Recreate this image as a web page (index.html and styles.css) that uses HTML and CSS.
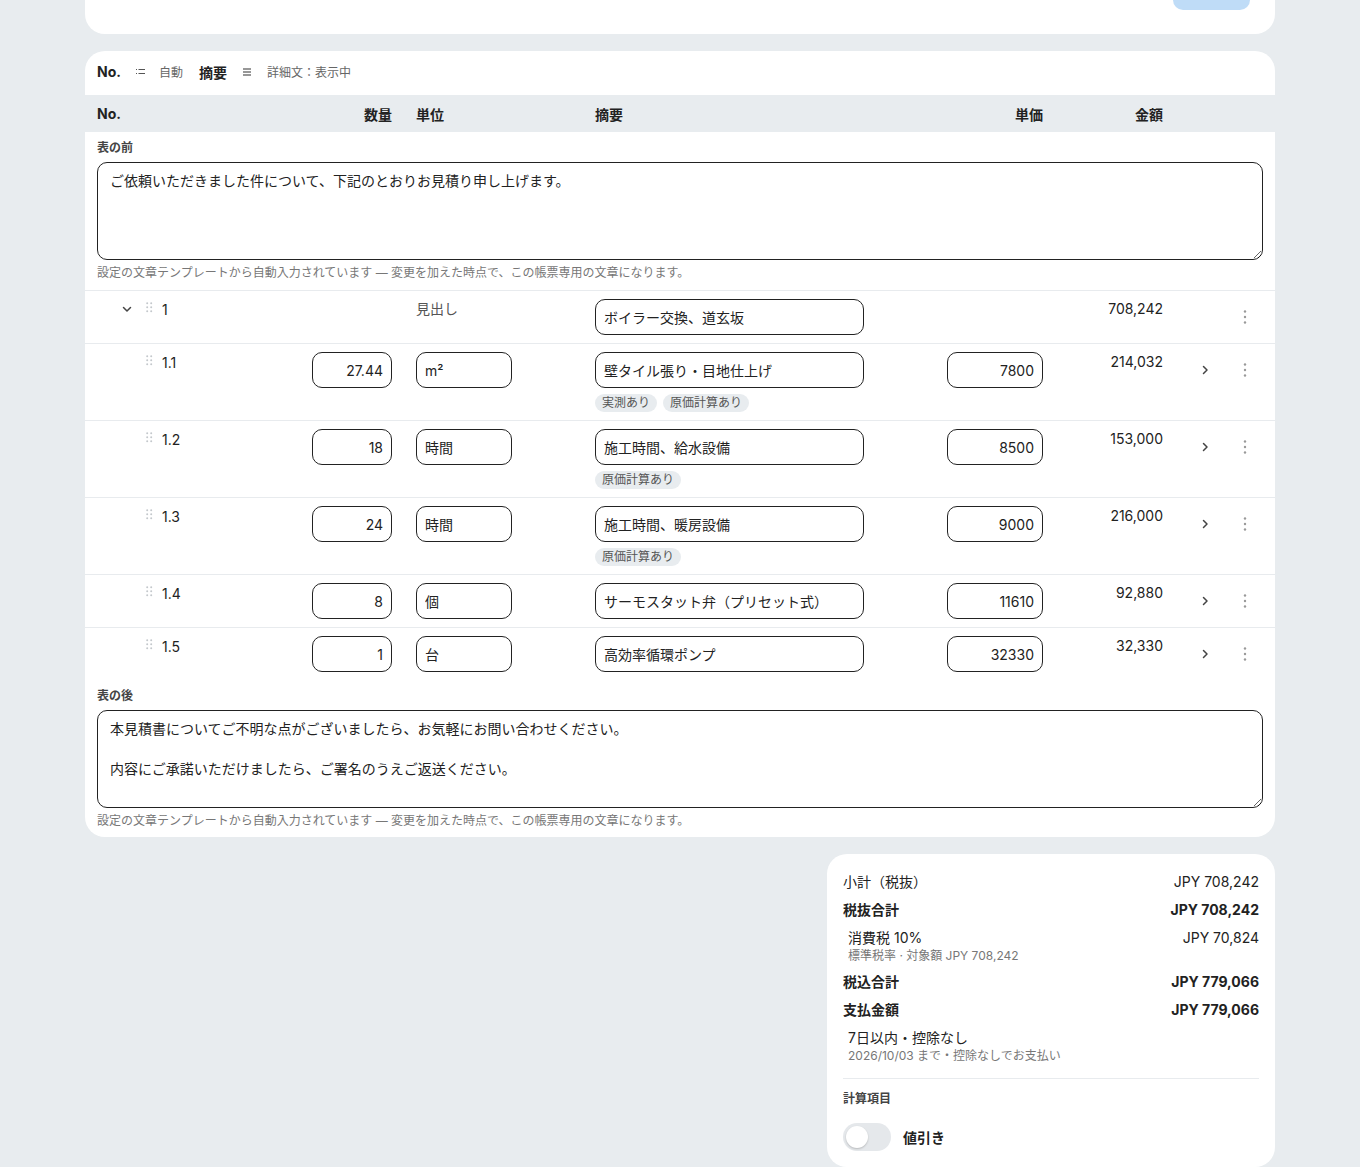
FILE: index.html
```html
<!DOCTYPE html>
<html lang="ja">
<head>
    <meta charset="UTF-8">
    <title>見積書</title>
    <link rel="stylesheet" href="styles.css">
</head>
<body>
<div class="page">
    <div class="topcard">
        <div class="topbtn"></div>
    </div>

    <div class="card">
        <div class="toolbar">
            <span class="tb-strong">No.</span>
            <svg class="tb-icon first" width="9" height="7" viewBox="0 0 9 7"><path d="M0 1.5h1M2.5 1.5H9M0 5.5h1M2.5 5.5H9" stroke="#555" stroke-width="1.2"/></svg>
            <span class="tb-muted">自動</span>
            <span class="tb-strong">摘要</span>
            <svg class="tb-icon second" width="8" height="8" viewBox="0 0 8 8"><path d="M0 1h8M0 4h8M0 7h8" stroke="#333" stroke-width="1.2"/></svg>
            <span class="tb-muted">詳細文：表示中</span>
        </div>

        <div class="grid head">
            <div>No.</div>
            <div class="r">数量</div>
            <div>単位</div>
            <div>摘要</div>
            <div class="r">単価</div>
            <div class="r">金額</div>
            <div></div>
        </div>

        <div class="textsec">
            <div class="sec-label">表の前</div>
            <textarea class="memo" rows="4">ご依頼いただきました件について、下記のとおりお見積り申し上げます。</textarea>
            <div class="hint">設定の文章テンプレートから自動入力されています — 変更を加えた時点で、この帳票専用の文章になります。</div>
        </div>

        <!-- 見出し行 -->
        <div class="grid row">
            <div class="no">
                <span class="caret"><svg width="12" height="12" viewBox="0 0 12 12"><path d="M2.5 4.5 6 8l3.5-3.5" fill="none" stroke="#444" stroke-width="1.5" stroke-linecap="round" stroke-linejoin="round"/></svg></span>
                <span class="drag"><svg width="7" height="11" viewBox="0 0 7 11"><g fill="#c4c8cc"><circle cx="1.2" cy="1.2" r="1"/><circle cx="5.2" cy="1.2" r="1"/><circle cx="1.2" cy="5.2" r="1"/><circle cx="5.2" cy="5.2" r="1"/><circle cx="1.2" cy="9.2" r="1"/><circle cx="5.2" cy="9.2" r="1"/></g></svg></span>
                <span>1</span>
            </div>
            <div></div>
            <div class="txt muted">見出し</div>
            <div><input class="in desc" value="ボイラー交換、道玄坂"></div>
            <div></div>
            <div class="txt r">708,242</div>
            <div class="acts">
                <span></span>
                <span class="kebab"><svg width="4" height="14" viewBox="0 0 4 14"><g fill="#999"><circle cx="2" cy="1.5" r="1.2"/><circle cx="2" cy="7" r="1.2"/><circle cx="2" cy="12.5" r="1.2"/></g></svg></span>
            </div>
        </div>

        <div class="grid row">
            <div class="no">
                <span class="caret"></span>
                <span class="drag"><svg width="7" height="11" viewBox="0 0 7 11"><g fill="#c4c8cc"><circle cx="1.2" cy="1.2" r="1"/><circle cx="5.2" cy="1.2" r="1"/><circle cx="1.2" cy="5.2" r="1"/><circle cx="5.2" cy="5.2" r="1"/><circle cx="1.2" cy="9.2" r="1"/><circle cx="5.2" cy="9.2" r="1"/></g></svg></span>
                <span>1.1</span>
            </div>
            <div><input class="in qty" value="27.44"></div>
            <div><input class="in unit" value="m²"></div>
            <div>
                <input class="in desc" value="壁タイル張り・目地仕上げ">
                <div class="badges"><span class="badge">実測あり</span><span class="badge">原価計算あり</span></div>
            </div>
            <div><input class="in price" value="7800"></div>
            <div class="txt r">214,032</div>
            <div class="acts">
                <span class="chev"><svg width="12" height="12" viewBox="0 0 12 12"><path d="M4.5 2.5 8 6l-3.5 3.5" fill="none" stroke="#444" stroke-width="1.5" stroke-linecap="round" stroke-linejoin="round"/></svg></span>
                <span class="kebab"><svg width="4" height="14" viewBox="0 0 4 14"><g fill="#999"><circle cx="2" cy="1.5" r="1.2"/><circle cx="2" cy="7" r="1.2"/><circle cx="2" cy="12.5" r="1.2"/></g></svg></span>
            </div>
        </div>

        <div class="grid row">
            <div class="no">
                <span class="caret"></span>
                <span class="drag"><svg width="7" height="11" viewBox="0 0 7 11"><g fill="#c4c8cc"><circle cx="1.2" cy="1.2" r="1"/><circle cx="5.2" cy="1.2" r="1"/><circle cx="1.2" cy="5.2" r="1"/><circle cx="5.2" cy="5.2" r="1"/><circle cx="1.2" cy="9.2" r="1"/><circle cx="5.2" cy="9.2" r="1"/></g></svg></span>
                <span>1.2</span>
            </div>
            <div><input class="in qty" value="18"></div>
            <div><input class="in unit" value="時間"></div>
            <div>
                <input class="in desc" value="施工時間、給水設備">
                <div class="badges"><span class="badge">原価計算あり</span></div>
            </div>
            <div><input class="in price" value="8500"></div>
            <div class="txt r">153,000</div>
            <div class="acts">
                <span class="chev"><svg width="12" height="12" viewBox="0 0 12 12"><path d="M4.5 2.5 8 6l-3.5 3.5" fill="none" stroke="#444" stroke-width="1.5" stroke-linecap="round" stroke-linejoin="round"/></svg></span>
                <span class="kebab"><svg width="4" height="14" viewBox="0 0 4 14"><g fill="#999"><circle cx="2" cy="1.5" r="1.2"/><circle cx="2" cy="7" r="1.2"/><circle cx="2" cy="12.5" r="1.2"/></g></svg></span>
            </div>
        </div>

        <div class="grid row">
            <div class="no">
                <span class="caret"></span>
                <span class="drag"><svg width="7" height="11" viewBox="0 0 7 11"><g fill="#c4c8cc"><circle cx="1.2" cy="1.2" r="1"/><circle cx="5.2" cy="1.2" r="1"/><circle cx="1.2" cy="5.2" r="1"/><circle cx="5.2" cy="5.2" r="1"/><circle cx="1.2" cy="9.2" r="1"/><circle cx="5.2" cy="9.2" r="1"/></g></svg></span>
                <span>1.3</span>
            </div>
            <div><input class="in qty" value="24"></div>
            <div><input class="in unit" value="時間"></div>
            <div>
                <input class="in desc" value="施工時間、暖房設備">
                <div class="badges"><span class="badge">原価計算あり</span></div>
            </div>
            <div><input class="in price" value="9000"></div>
            <div class="txt r">216,000</div>
            <div class="acts">
                <span class="chev"><svg width="12" height="12" viewBox="0 0 12 12"><path d="M4.5 2.5 8 6l-3.5 3.5" fill="none" stroke="#444" stroke-width="1.5" stroke-linecap="round" stroke-linejoin="round"/></svg></span>
                <span class="kebab"><svg width="4" height="14" viewBox="0 0 4 14"><g fill="#999"><circle cx="2" cy="1.5" r="1.2"/><circle cx="2" cy="7" r="1.2"/><circle cx="2" cy="12.5" r="1.2"/></g></svg></span>
            </div>
        </div>

        <div class="grid row">
            <div class="no">
                <span class="caret"></span>
                <span class="drag"><svg width="7" height="11" viewBox="0 0 7 11"><g fill="#c4c8cc"><circle cx="1.2" cy="1.2" r="1"/><circle cx="5.2" cy="1.2" r="1"/><circle cx="1.2" cy="5.2" r="1"/><circle cx="5.2" cy="5.2" r="1"/><circle cx="1.2" cy="9.2" r="1"/><circle cx="5.2" cy="9.2" r="1"/></g></svg></span>
                <span>1.4</span>
            </div>
            <div><input class="in qty" value="8"></div>
            <div><input class="in unit" value="個"></div>
            <div><input class="in desc" value="サーモスタット弁（プリセット式）"></div>
            <div><input class="in price" value="11610"></div>
            <div class="txt r">92,880</div>
            <div class="acts">
                <span class="chev"><svg width="12" height="12" viewBox="0 0 12 12"><path d="M4.5 2.5 8 6l-3.5 3.5" fill="none" stroke="#444" stroke-width="1.5" stroke-linecap="round" stroke-linejoin="round"/></svg></span>
                <span class="kebab"><svg width="4" height="14" viewBox="0 0 4 14"><g fill="#999"><circle cx="2" cy="1.5" r="1.2"/><circle cx="2" cy="7" r="1.2"/><circle cx="2" cy="12.5" r="1.2"/></g></svg></span>
            </div>
        </div>

        <div class="grid row last">
            <div class="no">
                <span class="caret"></span>
                <span class="drag"><svg width="7" height="11" viewBox="0 0 7 11"><g fill="#c4c8cc"><circle cx="1.2" cy="1.2" r="1"/><circle cx="5.2" cy="1.2" r="1"/><circle cx="1.2" cy="5.2" r="1"/><circle cx="5.2" cy="5.2" r="1"/><circle cx="1.2" cy="9.2" r="1"/><circle cx="5.2" cy="9.2" r="1"/></g></svg></span>
                <span>1.5</span>
            </div>
            <div><input class="in qty" value="1"></div>
            <div><input class="in unit" value="台"></div>
            <div><input class="in desc" value="高効率循環ポンプ"></div>
            <div><input class="in price" value="32330"></div>
            <div class="txt r">32,330</div>
            <div class="acts">
                <span class="chev"><svg width="12" height="12" viewBox="0 0 12 12"><path d="M4.5 2.5 8 6l-3.5 3.5" fill="none" stroke="#444" stroke-width="1.5" stroke-linecap="round" stroke-linejoin="round"/></svg></span>
                <span class="kebab"><svg width="4" height="14" viewBox="0 0 4 14"><g fill="#999"><circle cx="2" cy="1.5" r="1.2"/><circle cx="2" cy="7" r="1.2"/><circle cx="2" cy="12.5" r="1.2"/></g></svg></span>
            </div>
        </div>

        <div class="textsec after">
            <div class="sec-label">表の後</div>
            <textarea class="memo" rows="4">本見積書についてご不明な点がございましたら、お気軽にお問い合わせください。

内容にご承諾いただけましたら、ご署名のうえご返送ください。</textarea>
            <div class="hint">設定の文章テンプレートから自動入力されています — 変更を加えた時点で、この帳票専用の文章になります。</div>
        </div>
    </div>

    <div class="bottom">
        <div class="totals">
            <div class="t-row"><span>小計（税抜）</span><span>JPY 708,242</span></div>
            <div class="t-row bold"><span>税抜合計</span><span>JPY 708,242</span></div>
            <div class="t-row sub">
                <div>
                    <div>消費税 10%</div>
                    <div class="t-note">標準税率 · 対象額 JPY 708,242</div>
                </div>
                <span>JPY 70,824</span>
            </div>
            <div class="t-row bold"><span>税込合計</span><span>JPY 779,066</span></div>
            <div class="t-row bold"><span>支払金額</span><span>JPY 779,066</span></div>
            <div class="t-row sub">
                <div>
                    <div>7日以内・控除なし</div>
                    <div class="t-note">2026/10/03 まで・控除なしでお支払い</div>
                </div>
            </div>
            <div class="t-line"></div>
            <div class="sec-label">計算項目</div>
            <div class="opt">
                <span class="toggle"><span class="knob"></span></span>
                <span class="opt-label">値引き</span>
            </div>
        </div>
    </div>
</div>
</body>
</html>
```

FILE: styles.css
```css
*{
    margin: 0;
    padding: 0;
    box-sizing: border-box;
}
body{
    background: #e8ecef;
    font-family: "Inter", "Noto Sans CJK JP", sans-serif;
    font-size: 14px;
    color: #222;
}
.page{
    width: 1190px;
    margin: 0 auto;
    display: flex;
    flex-direction: column;
    gap: 17px;
}
.topcard{
    height: 34px;
    background: #fff;
    border-radius: 0 0 20px 20px;
    display: flex;
    justify-content: flex-end;
    padding-right: 25px;
}
.topbtn{
    width: 77px;
    height: 10px;
    background: #bfdcf7;
    border-radius: 0 0 16px 16px;
}
.card{
    background: #fff;
    border-radius: 20px;
    overflow: hidden;
}
.toolbar{
    height: 44px;
    display: flex;
    align-items: center;
    padding: 0 12px 3px;
}
.tb-strong{
    font-weight: 700;
    font-size: 14px;
}
.tb-icon.first{
    margin: 0 14px 0 15px;
}
.tb-icon.second{
    margin: 0 16px 0 16px;
}
.tb-muted{
    font-size: 12px;
    color: #666;
    margin-right: 16px;
}
.grid{
    display: grid;
    grid-template-columns: 191px 80px 155px 328px 96px 96px 76px;
    column-gap: 24px;
    padding: 0 12px;
}
.r{
    text-align: right;
}
.head{
    background: #e8ecef;
    height: 37px;
    align-items: center;
    font-weight: 700;
}
.textsec{
    padding: 8px 12px 9px;
}
.textsec.after{
    padding-top: 8px;
    padding-bottom: 8px;
}
.sec-label{
    font-size: 12px;
    font-weight: 600;
    color: #444;
    line-height: 16px;
    margin-bottom: 6px;
}
.memo{
    display: block;
    width: 100%;
    border: 1px solid #222;
    border-radius: 10px;
    padding: 8px 12px;
    font-family: inherit;
    font-size: 14px;
    line-height: 20px;
    color: #222;
    resize: vertical;
    outline: none;
}
.hint{
    font-size: 12px;
    color: #777;
    line-height: 16px;
    margin-top: 5px;
}
.row{
    border-top: 1px solid #e8ebee;
    padding-top: 8px;
    padding-bottom: 8px;
    align-items: start;
}
.no{
    display: flex;
    align-items: center;
    height: 20px;
    padding-left: 18px;
}
.caret{
    width: 24px;
    display: flex;
    justify-content: center;
}
.drag{
    width: 16px;
    margin-left: 2px;
    margin-right: 5px;
    display: flex;
    justify-content: center;
    margin-top: -3px;
}
.txt{
    line-height: 20px;
}
.muted{
    color: #555;
}
.in{
    display: block;
    height: 36px;
    border: 1px solid #222;
    border-radius: 10px;
    padding: 0 8px;
    font-family: inherit;
    font-size: 14px;
    color: #222;
    background: #fff;
    outline: none;
}
.qty{
    width: 80px;
    text-align: right;
}
.unit{
    width: 96px;
}
.desc{
    width: 269px;
}
.price{
    width: 96px;
    text-align: right;
}
.badges{
    display: flex;
    gap: 6px;
    margin-top: 6px;
}
.badge{
    height: 18px;
    line-height: 18px;
    padding: 0 7px;
    border-radius: 9px;
    background: #e8ecef;
    color: #555;
    font-size: 12px;
}
.acts{
    display: flex;
    height: 36px;
    align-items: center;
}
.chev,
.acts > span:first-child{
    width: 36px;
    display: flex;
    justify-content: center;
}
.kebab{
    width: 36px;
    margin-left: 4px;
    display: flex;
    justify-content: center;
}
.bottom{
    display: flex;
    justify-content: flex-end;
}
.totals{
    width: 448px;
    background: #fff;
    border-radius: 20px;
    padding: 18px 16px 16px;
    display: flex;
    flex-direction: column;
    gap: 8px;
}
.t-row{
    display: flex;
    justify-content: space-between;
    line-height: 20px;
}
.t-row.bold{
    font-weight: 700;
}
.t-row.sub{
    padding-left: 5px;
}
.t-note{
    font-size: 12px;
    color: #777;
    line-height: 16px;
}
.t-line{
    border-top: 1px solid #e8ebee;
    margin-top: 6px;
    margin-bottom: 4px;
}
.totals .sec-label{
    margin-bottom: 8px;
}
.opt{
    display: flex;
    align-items: center;
    gap: 12px;
}
.toggle{
    width: 48px;
    height: 28px;
    border-radius: 14px;
    background: #e5e8eb;
    display: flex;
    align-items: center;
    padding-left: 3px;
}
.knob{
    width: 22px;
    height: 22px;
    border-radius: 50%;
    background: #fff;
    box-shadow: 0 1px 2px rgba(0,0,0,.2);
}
.opt-label{
    font-weight: 700;
}
```
